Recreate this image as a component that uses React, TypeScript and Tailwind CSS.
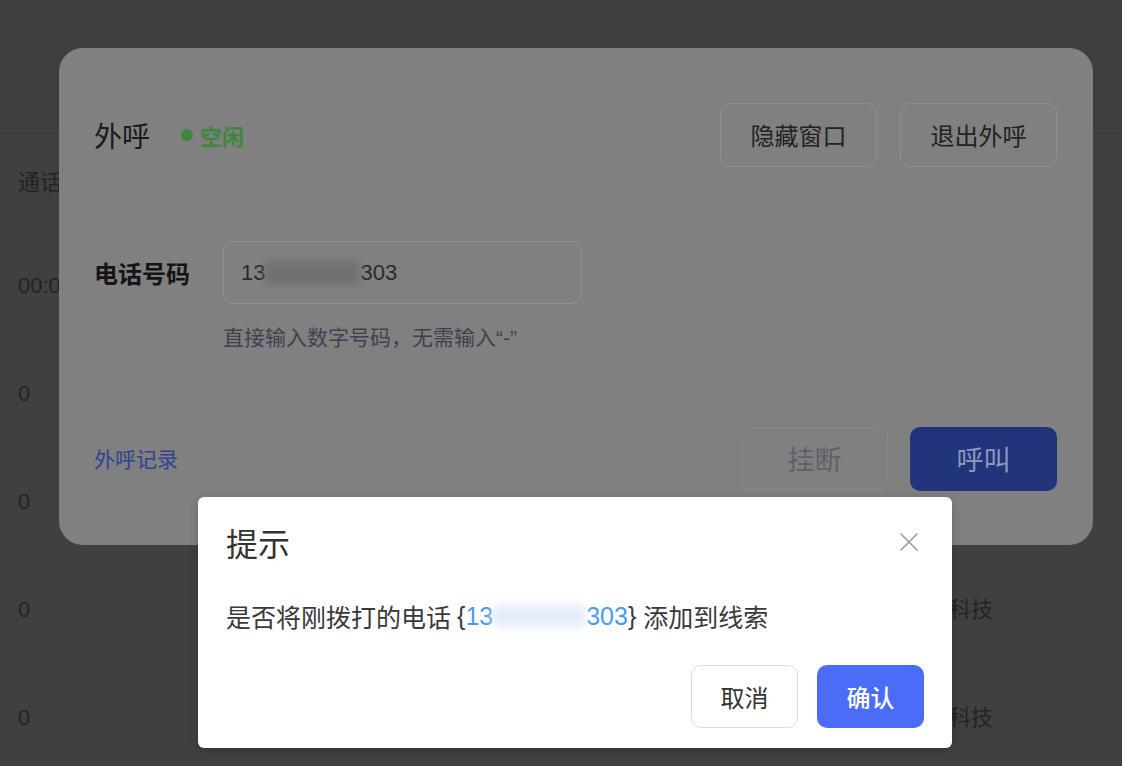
import React from 'react';

const rows = [
  { left: '00:00:32', right: '云启科技' },
  { left: '0', right: '云启科技' },
  { left: '0', right: '云启科技' },
  { left: '0', right: '云启科技' },
  { left: '0', right: '云启科技' },
];

function CloseIcon() {
  return (
    <svg width="20" height="20" viewBox="0 0 20 20" fill="none">
      <path d="M2 2L18 18M18 2L2 18" stroke="#9a9a9a" strokeWidth="1.6" strokeLinecap="round" />
    </svg>
  );
}

export default function App() {
  return (
    <div className="relative w-[1122px] h-[766px] overflow-hidden bg-white font-['Liberation_Sans','Noto_Sans_CJK_SC',sans-serif]">
      {/* page behind the modals */}
      <div className="h-[134px] bg-[#f3f5fa] border-b border-[#e8ebf2]" />
      <div className="flex flex-col text-[22px] text-[#8a8d96]">
        <div className="h-[98px] flex items-center pl-[18px] border-b border-[#ebeef5]">
          <span className="w-[887px]">通话时长</span>
          <span>线索名称</span>
        </div>
        {rows.map((r, i) => (
          <div key={i} className="h-[108px] flex items-center pl-[18px] border-b border-[#ebeef5]">
            <span className="w-[887px]">{r.left}</span>
            <span>{r.right}</span>
          </div>
        ))}
      </div>

      {/* mask */}
      <div className="absolute inset-0 bg-black/75" />

      {/* outbound call panel (dimmed) */}
      <div className="absolute left-[59px] top-[48px] w-[1034px] h-[497px] rounded-[24px] bg-[#808080] pl-[35px] pr-[36px] pt-[55px] flex flex-col">
        <div className="flex items-center justify-between h-[64px]">
          <div className="flex items-center">
            <span className="text-[28px] text-[#1a1a1a] font-['Noto_Sans_CJK_SC',sans-serif]">外呼</span>
            <span className="ml-[31px] w-[12px] h-[12px] rounded-full bg-[#3d873f]" />
            <span className="ml-[7px] text-[22px] font-bold text-[#3d873f] font-['Noto_Sans_CJK_SC',sans-serif]">空闲</span>
          </div>
          <div className="flex gap-[23px]">
            <button className="w-[157px] h-[64px] rounded-[10px] border border-[#8b8f9a] text-[24px] text-[#222222] font-['Noto_Sans_CJK_SC',sans-serif]">隐藏窗口</button>
            <button className="w-[157px] h-[64px] rounded-[10px] border border-[#8b8f9a] text-[24px] text-[#222222] font-['Noto_Sans_CJK_SC',sans-serif]">退出外呼</button>
          </div>
        </div>

        <div className="flex items-center mt-[74px]">
          <span className="w-[129px] text-[24px] font-bold text-[#141414] font-['Noto_Sans_CJK_SC',sans-serif]">电话号码</span>
          <div className="w-[359px] h-[63px] rounded-[10px] border border-[#8d919c] flex items-center pl-[17px] text-[22px] text-[#2a2a2a]">
            <span>13</span>
            <span className="inline-block w-[95px] h-[22px] bg-[#6f7074] blur-[4px]" />
            <span>303</span>
          </div>
        </div>
        <div className="ml-[129px] mt-[20px] text-[21px] leading-[28px] text-[#3d4251]">
          直接输入数字号码，无需输入“-”
        </div>

        <div className="flex items-center justify-between mt-[75px]">
          <span className="text-[21px] text-[#2f4296] font-['Noto_Sans_CJK_SC',sans-serif]">外呼记录</span>
          <div className="flex gap-[22px]">
            <button className="w-[147px] h-[64px] rounded-[10px] border border-[#85888f] text-[27px] text-[#5d616b] font-['Noto_Sans_CJK_SC',sans-serif]">挂断</button>
            <button className="w-[147px] h-[64px] rounded-[10px] bg-[#22347c] text-[27px] text-[#8e97bc] font-['Noto_Sans_CJK_SC',sans-serif]">呼叫</button>
          </div>
        </div>
      </div>

      {/* confirm dialog */}
      <div className="absolute left-[198px] top-[497px] w-[754px] h-[251px] rounded-[6px] bg-white shadow-[0_2px_10px_rgba(0,0,0,0.2)] flex flex-col">
        <div className="flex items-center justify-between pt-[25px] pl-[28px] pr-[33px]">
          <span className="text-[32px] leading-[40px] text-[#333333] font-['Noto_Sans_CJK_SC',sans-serif]">提示</span>
          <CloseIcon />
        </div>
        <div className="mt-[36px] pl-[28px] flex items-center text-[25px] leading-[36px] text-[#3a3a3a]">
          <span className="font-['Noto_Sans_CJK_SC',sans-serif]">是否将刚拨打的电话</span>
          <span className="ml-[6px]">{'{'}</span>
          <span className="text-[#4a9af5]">13</span>
          <span className="inline-block w-[93px] h-[22px] bg-[#e4eefb] blur-[4px]" />
          <span className="text-[#4a9af5]">303</span>
          <span>{'}'}</span>
          <span className="ml-[7px] font-['Noto_Sans_CJK_SC',sans-serif]">添加到线索</span>
        </div>
        <div className="mt-[31px] flex justify-end gap-[19px] pr-[28px]">
          <button className="w-[107px] h-[63px] rounded-[10px] border border-[#d6dbe8] bg-white text-[24px] text-[#333333] font-['Noto_Sans_CJK_SC',sans-serif]">取消</button>
          <button className="w-[107px] h-[63px] rounded-[10px] bg-[#4a6cf7] text-[24px] text-white font-medium font-['Noto_Sans_CJK_SC',sans-serif]">确认</button>
        </div>
      </div>
    </div>
  );
}
